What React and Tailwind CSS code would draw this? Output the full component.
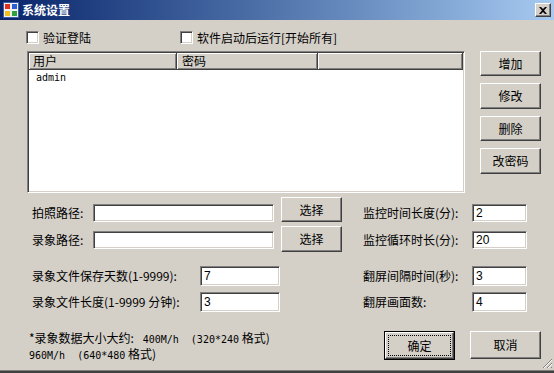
import React from "react";

const CJK = "font-['Noto_Sans_CJK_SC','Liberation_Sans',sans-serif]";
const MONO = "font-['DejaVu_Sans_Mono','Liberation_Mono',monospace]";

function Btn({ children, className = "" }) {
  return (
    <div
      className={`flex items-center justify-center bg-[#d4d0c8] border border-t-white border-l-white border-r-[#404040] border-b-[#404040] shadow-[inset_-1px_-1px_0_#808080] text-[12px] leading-[14px] text-black ${className}`}
    >
      {children}
    </div>
  );
}

function Field({ value = "", className = "" }) {
  return (
    <div
      className={`flex items-center bg-white border border-t-[#808080] border-l-[#808080] border-r-white border-b-white shadow-[inset_1px_1px_0_#404040,inset_-1px_-1px_0_#d4d0c8] pl-[3px] text-[12px] leading-[14px] font-['Liberation_Sans',sans-serif] text-black ${className}`}
    >
      {value}
    </div>
  );
}

function Check() {
  return (
    <div className="w-[13px] h-[13px] bg-white border border-t-[#808080] border-l-[#808080] border-r-white border-b-white shadow-[inset_1px_1px_0_#404040,inset_-1px_-1px_0_#d4d0c8]" />
  );
}

function HeadCell({ children, className = "" }) {
  return (
    <div
      className={`h-[17px] flex items-center pl-[4px] bg-[#d4d0c8] border-r border-r-[#404040] border-b border-b-[#404040] shadow-[inset_1px_1px_0_white,inset_-1px_-1px_0_#808080] text-[12px] leading-[14px] ${className}`}
    >
      {children}
    </div>
  );
}

function AppIcon() {
  return (
    <svg width="16" height="16" viewBox="0 0 16 16">
      <rect x="0.5" y="0.5" width="15" height="15" fill="#f0f0f0" stroke="#3a5fa8" />
      <rect x="2" y="2" width="5" height="5" fill="#e03020" />
      <rect x="9" y="2" width="5" height="5" fill="#2a5fd8" />
      <rect x="2" y="9" width="5" height="5" fill="#f0c020" />
      <rect x="9" y="9" width="5" height="5" fill="#30a040" />
    </svg>
  );
}

export default function App() {
  return (
    <div className={`relative w-[554px] h-[373px] bg-[#d4d0c8] flex flex-col overflow-hidden text-black ${CJK}`}>
      {/* Title bar */}
      <div className="h-[20px] flex items-center pl-[3px] pr-[3px] bg-linear-to-r from-[#0a246a] to-[#a6caf0]">
        <AppIcon />
        <div className="ml-[3px] text-white font-bold text-[12px] leading-[14px]">系统设置</div>
        <div className="ml-auto w-[16px] h-[14px] flex items-center justify-center bg-[#d4d0c8] border border-t-white border-l-white border-r-[#404040] border-b-[#404040] shadow-[inset_-1px_-1px_0_#808080]">
          <svg width="8" height="7" viewBox="0 0 8 7">
            <path d="M0 0h2l2 2 2-2h2L5 3.5 8 7H6L4 5 2 7H0l3-3.5z" fill="#000" />
          </svg>
        </div>
      </div>

      {/* Checkboxes */}
      <div className="mt-[11px] h-[13px] flex items-center pl-[26px] text-[12px] leading-[14px]">
        <div className="w-[154px] flex items-center">
          <Check />
          <span className="ml-[4px]">验证登陆</span>
        </div>
        <Check />
        <span className="ml-[4px]">软件启动后运行[开始所有]</span>
      </div>

      {/* List + buttons */}
      <div className="mt-[7px] flex pl-[27px]">
        <div className="w-[438px] h-[142px] bg-white border border-t-[#808080] border-l-[#808080] border-r-white border-b-white shadow-[inset_1px_1px_0_#404040,inset_-1px_-1px_0_#d4d0c8] p-[1px] flex flex-col">
          <div className="flex">
            <HeadCell className="w-[148px]">用户</HeadCell>
            <HeadCell className="w-[141px] pl-[5px]">密码</HeadCell>
            <HeadCell className="flex-1" />
          </div>
          <div className={`pl-[7px] mt-[1px] text-[10px] leading-[14px] ${MONO}`}>admin</div>
        </div>
        <div className="ml-[15px] w-[61px] flex flex-col gap-[7px]">
          <Btn className="h-[25px]">增加</Btn>
          <Btn className="h-[26px]">修改</Btn>
          <Btn className="h-[25px]">删除</Btn>
          <Btn className="h-[26px]">改密码</Btn>
        </div>
      </div>

      {/* Settings rows */}
      <div className="mt-[4px] pl-[32px] text-[12px] leading-[14px]">
        <div className="h-[25px] flex items-start">
          <div className="mt-[7px] flex items-center">
            <span className="w-[61px]">拍照路径:</span>
            <Field className="w-[181px] h-[18px]" />
          </div>
          <Btn className="ml-[7px] w-[61px] h-[25px]">选择</Btn>
          <div className="mt-[7px] ml-[21px] flex items-center">
            <span className="w-[109px]">监控时间长度(分):</span>
            <Field className="w-[55px] h-[18px]" value="2" />
          </div>
        </div>
        <div className="mt-[4px] h-[26px] flex items-start">
          <div className="mt-[5px] flex items-center">
            <span className="w-[61px]">录象路径:</span>
            <Field className="w-[181px] h-[18px]" />
          </div>
          <Btn className="ml-[7px] w-[61px] h-[26px]">选择</Btn>
          <div className="mt-[5px] ml-[21px] flex items-center">
            <span className="w-[109px]">监控循环时长(分):</span>
            <Field className="w-[55px] h-[18px]" value="20" />
          </div>
        </div>
        <div className="mt-[14px] h-[20px] flex items-center">
          <span className="w-[168px]">录象文件保存天数(1-9999):</span>
          <Field className="w-[80px] h-[20px]" value="7" />
          <span className="ml-[83px] w-[109px]">翻屏间隔时间(秒):</span>
          <Field className="w-[55px] h-[20px]" value="3" />
        </div>
        <div className="mt-[6px] h-[20px] flex items-center">
          <span className="w-[168px]">录象文件长度(1-9999 分钟):</span>
          <Field className="w-[80px] h-[20px]" value="3" />
          <span className="ml-[83px] w-[109px]">翻屏画面数:</span>
          <Field className="w-[55px] h-[20px]" value="4" />
        </div>
      </div>

      {/* Bottom */}
      <div className="mt-[19px] flex items-start">
        <div className="w-[384px] pl-[29px] text-[12px] leading-[14px]">
          <div>
            *录象数据大小大约:{" "}
            <span className={`${MONO} text-[10px]`}>&nbsp;400M/h&nbsp;&nbsp;(320*240</span> 格式)
          </div>
          <div>
            <span className={`${MONO} text-[10px]`}>960M/h&nbsp;&nbsp;(640*480</span> 格式)
          </div>
        </div>
        <div className="w-[71px] h-[29px] border border-black flex">
          <div className="flex-1 flex bg-[#d4d0c8] border border-t-white border-l-white border-r-[#404040] border-b-[#404040] shadow-[inset_-1px_-1px_0_#808080] p-[2px]">
            <div className="flex-1 flex items-center justify-center border border-dotted border-black text-[12px] leading-[14px]">确定</div>
          </div>
        </div>
        <Btn className="ml-[15px] w-[71px] h-[28px]">取消</Btn>
      </div>

      <div className="mt-auto h-[3px] border-t border-t-[#808080] bg-[#404040]" />

      {/* size grip */}
      <svg className="absolute right-[1px] bottom-[4px]" width="11" height="11" viewBox="0 0 11 11">
        <path d="M10 1L1 10M10 5L5 10M10 9L9 10" stroke="#808080" strokeWidth="1" />
        <path d="M10 2L2 10M10 6L6 10" stroke="#ffffff" strokeWidth="1" />
      </svg>
    </div>
  );
}
